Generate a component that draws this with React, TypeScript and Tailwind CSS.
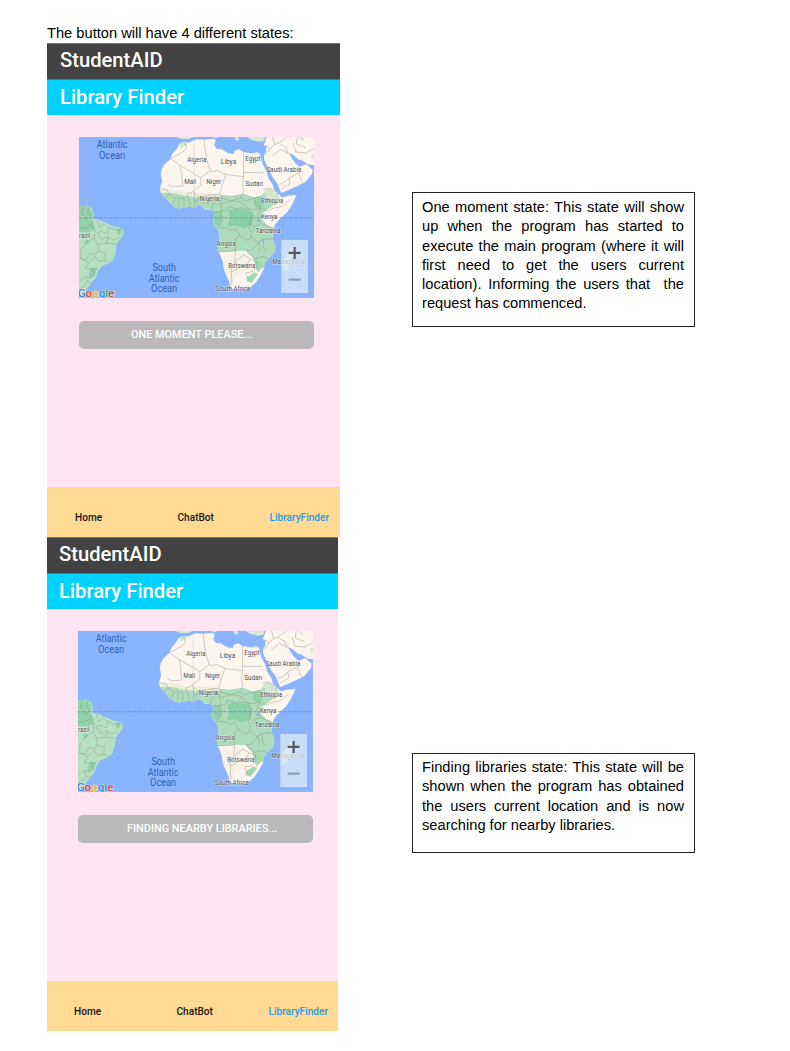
import React from "react";

type Label = { text: string; x: number; y: number; w: number };

const countries: Label[] = [
  { text: "Algeria", x: 348, y: 91, w: 58 },
  { text: "Libya", x: 449, y: 98, w: 46 },
  { text: "Egypt", x: 522, y: 90, w: 46 },
  { text: "Saudi Arabia", x: 586, y: 121, w: 104 },
  { text: "Mali", x: 339, y: 159, w: 36 },
  { text: "Niger", x: 405, y: 159, w: 45 },
  { text: "Sudan", x: 522, y: 164, w: 53 },
  { text: "Nigeria", x: 386, y: 210, w: 58 },
  { text: "Ethiopia", x: 570, y: 215, w: 66 },
  { text: "Kenya", x: 569, y: 264, w: 49 },
  { text: "Tanzania", x: 553, y: 304, w: 74 },
  { text: "Angola", x: 437, y: 342, w: 57 },
  { text: "Botswana", x: 471, y: 410, w: 81 },
  { text: "South Africa", x: 434, y: 479, w: 102 },
  { text: "Madagascar", x: 603, y: 397, w: 102 },
];

const oceans: Label[] = [
  { text: "Atlantic", x: 77, y: 51, w: 92 },
  { text: "Ocean", x: 84, y: 83, w: 78 },
  { text: "South", x: 244, y: 418, w: 71 },
  { text: "Atlantic", x: 233, y: 450, w: 92 },
  { text: "Ocean", x: 240, y: 482, w: 78 },
];

const AFRICA =
  "M335 33L325 38L313 58L303 68L299 82L281 98L272 112L269 128L273 150L266 172L271 188L283 198L293 210L304 223L322 231L338 229L352 226L370 228L384 219L395 226L403 235L420 235L429 242L430 256L425 266L427 278L437 289L443 304L446 322L440 346L441 359L449 374L456 394L458 412L467 434L476 453L477 467L489 474L512 471L535 468L553 453L568 431L579 409L579 394L595 378L611 360L612 342L605 322L604 301L611 280L624 264L649 241L664 216L676 190L650 193L632 198L623 189L608 174L603 157L592 142L586 121L575 99L569 82L566 66L538 66L517 62L503 54L489 59L488 68L471 66L451 54L436 52L429 42L434 27L428 22L399 25L375 24L353 34Z";

function WorldMap() {
  return (
    <svg viewBox="24 17 704 482" preserveAspectRatio="none" className="block h-[161px] w-[235px]" fontFamily="Roboto, sans-serif">
      <defs>
        <clipPath id="africa"><path d={AFRICA} /></clipPath>
      </defs>
      <rect x="24" y="17" width="704" height="482" fill="#8ab4fd" />
      <path d={AFRICA} fill="#fdf5ee" />
      <g clipPath="url(#africa)">
        <path d="M260 174L300 180L335 187L382 196L445 190L479 193L518 187L550 199L571 193L590 172L609 182L620 206L608 220L594 230L576 244L570 260L588 282L615 291L615 370L580 412L562 396L546 380L526 358L493 358L440 362L425 300L418 242L350 240L270 230Z" fill="#acdcba" />
        <path d="M250 169L310 174L355 184L383 183L448 188L447 196L382 199L338 192L307 185L260 184Z" fill="#efeedb" />
        <path d="M472 236L498 230L535 237L547 253L541 279L519 290L490 282L469 285L476 263Z" fill="#8bd0a4" />
        <path d="M425 240L452 239L455 259L444 284L428 280ZM552 198L570 197L580 216L567 231L550 223Z" fill="#91d3a9" />
        <path d="M579 178L597 170L622 192L610 210L588 203Z" fill="#d1e8cf" />
        <path d="M457 364L514 361L537 382L543 411L521 424L494 436L480 467L455 430Z" fill="#f8f1e5" />
        <path d="M526 438L549 423L561 427L541 453L527 449ZM547 385L570 390L575 407L558 423Z" fill="#a2d7b4" />
        <path d="M326 34L351 28L344 44L329 49Z" fill="#cde9cf" />
      </g>
      <path d="M586 17L729 17L729 102L711 99L694 88L681 84L667 72L652 64L660 78L671 94L684 106L692 104L705 98L724 115L722 128L703 151L679 164L652 176L630 185L625 174L617 154L603 135L592 112L579 86L578 73L584 62L586 45L577 41L582 31Z" fill="#fdf5ee" />
      <path d="M682 17L697 20L700 27L690 28ZM721 69L728 68V84L719 78Z" fill="#d6ead4" />
      <path d="M489 17L500 17L505 26L495 28ZM526 17L582 17L579 28L563 31L540 25ZM315 17L367 17L355 23L332 23ZM421 17L441 17L437 21Z" fill="#d9ead1" />
      <path d="M549 63L560 61L559 65Z" fill="#f5f1e3" />
      <path d="M24 225L48 223L62 229L69 246L66 261L83 265L108 275L126 284L145 287L158 296L158 309L148 322L137 336L134 362L128 382L119 393L92 404L80 421L73 440L58 458L45 475L39 490L24 490Z" fill="#b5e1c1" />
      <path d="M24 225L47 224L63 237L65 256L46 258L37 253L24 255Z" fill="#93d4ac" />
      <path d="M24 261L53 259L68 274L72 293L55 303L24 302ZM39 328L50 323L55 334L45 340ZM61 407L78 410L73 428L58 443L52 427ZM137 291L150 290L149 307L139 310Z" fill="#91d3a8" />
      <path d="M634 394L645 371L660 346L667 351L664 371L654 402L646 416L636 413Z" fill="#c2e6ca" />
      <g fill="none" stroke="#8f8f86" strokeWidth="1.3" strokeLinejoin="round">
        <path d="M335 33L346 42L344 55L324 68L301 80M300 83L328 103L335 164L305 166L291 160M328 103L389 139L417 118L408 89L404 69L399 25M417 118L429 121L438 117L464 129L517 136M517 63L517 136M517 123L577 123M464 129L454 157L446 188L452 199L481 208L508 199L518 180L514 165L517 136M389 139L389 161L365 180L348 188L351 204M365 180L382 196L427 190L446 188M267 172L287 175L296 189L283 198M296 189L311 199L303 223M311 199L338 200L338 229M324 201L322 231M354 202L357 226M370 189L370 227M382 196L378 220M427 190L438 201L426 217L420 235M438 201L449 216L452 239L429 242M452 199L447 216M452 217L481 208L508 211L533 232L550 235L569 229M508 199L523 209L550 199L571 193M550 199L551 221L569 229L588 239L606 230L631 226L653 206M576 174L595 170L618 185L621 206L631 210M452 239L468 235L472 224L495 233L508 229L533 232L544 251L538 276L549 286L569 276L588 283L604 292M444 242L456 255L454 271L439 287M430 256L454 271M437 289L460 288L481 297L493 291L506 312L527 326L541 318L561 332L575 323L607 321M538 276L533 289L541 303L538 318M569 229L560 251L568 273M506 312L493 321L493 358L440 361M526 358L543 356L562 334L570 326M526 358L552 381L575 375L594 383M493 358L491 391L480 413L482 463M491 391L519 370L537 382L528 399L506 408L482 420M537 382L555 387L556 406L545 420L524 424L526 435L538 445M575 323L578 353L585 361M560 332L568 346L563 362" />
        <path d="M586 43L596 52L610 40L604 17M610 40L629 31L648 17M624 37L644 48L651 66M596 52L583 71M604 72L628 54L651 66M684 106L681 125L653 140L635 155L623 159M681 125L694 154M653 140L655 158L630 172M665 35L674 62L703 65L728 52M678 17L675 38L703 49" />
        <path d="M36 224L32 243L38 258M54 225L50 243L63 253M24 261L38 257L49 265L61 256M65 262L59 281L72 295L70 319L48 331L30 355L29 382L47 385L57 364L71 371L82 357L80 338L70 319M24 288L42 291L59 281M80 266L85 288L99 277L114 288L109 307L89 299L79 305L90 323L112 316L125 325L144 318M114 288L134 296L157 296M112 316L105 335L80 338M105 335L134 338M82 357L103 365L101 387L81 389L72 374L53 393L29 382M101 387L119 393M53 393L42 412L64 413L70 431L58 439L43 434L25 449M64 413L79 412M43 434L48 450L60 455M48 450L38 466L24 472" />
      </g>
      <g fill="#7eacfa">
        <circle cx="562" cy="267" r="4" /><circle cx="547" cy="293" r="2" /><circle cx="575" cy="326" r="2.5" /><circle cx="374" cy="207" r="2.5" /><circle cx="111" cy="324" r="2" /><circle cx="549" cy="382" r="2" /><circle cx="488" cy="224" r="1.5" />
      </g>
      <path d="M24 259H728" fill="none" stroke="#8190c0" strokeWidth="3" strokeDasharray="10 5" />
      <path d="M369 17V499" stroke="#9dbcec" strokeWidth="1" />
      <g fill="#4b4d50" stroke="#fff" strokeOpacity=".6" strokeWidth="3" paintOrder="stroke" fontSize="19.5">
        {countries.map((l) => <text key={l.text} x={l.x} y={l.y} textLength={l.w} lengthAdjust="spacingAndGlyphs">{l.text}</text>)}
        <text x="24" y="318" textLength="34" lengthAdjust="spacingAndGlyphs">razil</text>
      </g>
      <g fill="#2c62b5" fontSize="30">
        {oceans.map((l) => <text key={l.y} x={l.x} y={l.y} textLength={l.w} lengthAdjust="spacingAndGlyphs">{l.text}</text>)}
      </g>
      <text x="20" y="495" fontSize="33" fontWeight="500" textLength="110" lengthAdjust="spacingAndGlyphs" stroke="#fff" strokeOpacity=".6" strokeWidth="3" paintOrder="stroke">
        <tspan fill="#4285f4">G</tspan><tspan fill="#ea4335">o</tspan><tspan fill="#fbbc05">o</tspan><tspan fill="#4285f4">g</tspan><tspan fill="#34a853">l</tspan><tspan fill="#ea4335">e</tspan>
      </text>
      <rect x="630" y="325" width="81" height="160" fill="#e4edf8" fillOpacity=".7" />
      <path d="M631 486H712V326" fill="none" stroke="#789bd5" strokeWidth="2" opacity=".6" />
      <path d="M652 364H688M670 346V382" stroke="#56595d" strokeWidth="6.5" />
      <path d="M652 444H688" stroke="#899bb8" strokeWidth="6.5" />
    </svg>
  );
}

function PhoneScreen({ status, second = false }: { status: string; second?: boolean }) {
  return (
    <section className={second ? "flex h-[494px] w-[291px] flex-col font-[Roboto,sans-serif]" : "flex h-[494px] w-[293px] flex-col font-[Roboto,sans-serif]"}>
      <header className={second ? "text-[20.2px] font-medium text-white [&>div]:pl-[12px]" : "text-[20.2px] font-medium text-white [&>div]:pl-[13px]"}>
        <div className="h-9 border-t border-[#777] bg-[#424242] leading-[33px]">StudentAID</div>
        <div className="h-9 border-t border-[#218ba2] bg-[#00d2ff] leading-[34px]">Library Finder</div>
      </header>
      <main className={second ? "flex-1 bg-[#ffe4f1] pl-[31px] pt-[22px]" : "flex-1 bg-[#ffe4f1] pl-8 pt-[22px]"}>
        <WorldMap />
        <button className={second ? "mt-[23px] block h-7 w-[235px] rounded-[5px] bg-[#b9b9b9] pl-[49px] pt-px text-left text-[10.9px] font-medium text-white" : "mt-[23px] block h-7 w-[235px] rounded-[5px] bg-[#b9b9b9] pl-[52px] pt-px text-left text-[10.9px] font-medium text-white"}>{status}</button>
      </main>
      <nav className={second ? "flex h-[50px] justify-between bg-[#ffda92] pl-[27px] pr-[10px] pt-[23px] text-[10.1px] font-medium leading-4 text-[#171612]" : "flex h-[50px] justify-between bg-[#ffda92] pl-[28px] pr-[11px] pt-[23px] text-[10.1px] font-medium leading-4 text-[#171612]"}>
        <span className="w-[102.5px]">Home</span>
        <span className="flex-1">ChatBot</span>
        <span className="text-[#259cea]">LibraryFinder</span>
      </nav>
    </section>
  );
}

function Note({ lines, className }: { lines: string[]; className: string }) {
  return (
    <aside className={className}>
      {lines.map((line, i) => (
        <p key={line} className={i === lines.length - 1 ? "whitespace-nowrap" : "whitespace-nowrap [text-align-last:justify]"}>{line}</p>
      ))}
    </aside>
  );
}

export default function App() {
  return (
    <div className="h-[1051px] w-[790px] overflow-hidden bg-white pl-[47px] pt-[23px] font-['Liberation_Sans',sans-serif] text-[14.67px] text-black">
      <h1 className="h-5 leading-5">The button will have 4 different states:</h1>
      <div className="flex">
        <div className="w-[364.5px]">
          <PhoneScreen status="ONE MOMENT PLEASE..." />
          <PhoneScreen status="FINDING NEARBY LIBRARIES..." second />
        </div>
        <div className="pt-[149px] leading-[19.3px]">
          <Note className="h-[135px] w-[283px] border border-[#222] px-[9.5px] pt-[5px]" lines={["One moment state: This state will show", "up when the program has started to", "execute the main program (where it will", "first need to get the users current", "location). Informing the users that \u00a0the", "request has commenced."]} />
          <Note className="mt-[426px] h-[100px] w-[283px] border border-[#222] px-[9.5px] pt-[4px]" lines={["Finding libraries state: This state will be", "shown when the program has obtained", "the users current location and is now", "searching for nearby libraries."]} />
        </div>
      </div>
    </div>
  );
}
